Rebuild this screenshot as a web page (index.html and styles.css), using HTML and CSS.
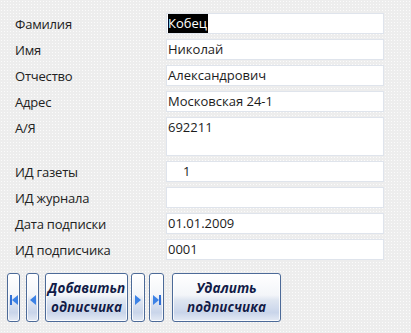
FILE: index.html
```html
<!DOCTYPE html>
<html lang="ru">
<head>
    <meta charset="UTF-8">
    <title>Подписчик</title>
    <link rel="stylesheet" href="styles.css">
</head>
<body>
    <div class="form">
        <div class="fields">
            <div class="label">Фамилия</div>
            <div class="field"><span class="selected">Кобец</span></div>

            <div class="label">Имя</div>
            <div class="field">Николай</div>

            <div class="label">Отчество</div>
            <div class="field">Александрович</div>

            <div class="label">Адрес</div>
            <div class="field">Московская 24-1</div>

            <div class="label">А/Я</div>
            <div class="field tall">692211</div>

            <div class="label">ИД газеты</div>
            <div class="field number">1</div>

            <div class="label">ИД журнала</div>
            <div class="field"></div>

            <div class="label">Дата подписки</div>
            <div class="field">01.01.2009</div>

            <div class="label">ИД подписчика</div>
            <div class="field">0001</div>
        </div>

        <!-- навигация по записям -->
        <div class="buttons">
            <button class="btn nav first" title="Первая запись">
                <svg width="8" height="10" viewBox="0 0 8 10"><rect x="0" y="0" width="2" height="10" fill="#2f6fd6"/><path d="M8 0 L2 5 L8 10 Z" fill="#3c82e6"/></svg>
            </button>
            <button class="btn nav prev" title="Предыдущая запись">
                <svg width="6" height="10" viewBox="0 0 6 10"><path d="M6 0 L0 5 L6 10 Z" fill="#3c82e6"/></svg>
            </button>
            <button class="btn action add">Добавитьп<br>одписчика</button>
            <button class="btn nav next" title="Следующая запись">
                <svg width="6" height="10" viewBox="0 0 6 10"><path d="M0 0 L6 5 L0 10 Z" fill="#3c82e6"/></svg>
            </button>
            <button class="btn nav last" title="Последняя запись">
                <svg width="8" height="10" viewBox="0 0 8 10"><path d="M0 0 L6 5 L0 10 Z" fill="#3c82e6"/><rect x="6" y="0" width="2" height="10" fill="#2f6fd6"/></svg>
            </button>
            <button class="btn action delete">Удалить<br>подписчика</button>
        </div>
    </div>
</body>
</html>
```

FILE: styles.css
```css
body {
    margin: 0;
    padding: 0;
    background-color: #ededed;
    background-image: radial-gradient(#fbfbfb 0.6px, transparent 0.9px);
    background-size: 3px 3px;
    font-family: 'Open Sans', 'Noto Sans', sans-serif;
    font-size: 13px;
    color: #1c1c1c;
}
.form {
    padding: 13px 0 0 15px;
}
.fields {
    display: grid;
    grid-template-columns: 151px 218px;
    row-gap: 5px;
}
.label {
    line-height: 19px;
    padding-top: 2px;
    color: #222;
    letter-spacing: -0.2px;
}
.field {
    box-sizing: border-box;
    height: 21px;
    background-color: #ffffff;
    border: 1px solid #dfe4ec;
    padding: 0 0 0 1px;
    line-height: 19px;
    white-space: nowrap;
    overflow: hidden;
}
.field.tall {
    height: 39px;
}
.field.number {
    padding-left: 16px;
}
.selected {
    display: inline-block;
    background-color: #000000;
    color: #ffffff;
    line-height: 19px;
    padding-right: 1px;
}
.buttons {
    display: flex;
    align-items: stretch;
    margin: 13px 0 0 -8px;
    height: 49px;
}
.btn {
    box-sizing: border-box;
    height: 49px;
    margin: 0;
    padding: 0;
    border: 1px solid #4c6a98;
    border-radius: 3px;
    background: linear-gradient(to bottom, #ffffff 0%, #f3f5f9 45%, #dfe6f1 55%, #c9d5ea 82%, #e4eaf4 100%);
    box-shadow: inset 0 0 0 1px rgba(255, 255, 255, 0.8);
    cursor: pointer;
    display: flex;
    align-items: center;
    justify-content: center;
}
.nav {
    width: 13px;
}
.nav svg {
    display: block;
    margin-top: 5px;
}
.first { width: 13px; }
.prev { width: 13px; margin-left: 6px; }
.add { width: 83px; margin-left: 6px; }
.next { width: 14px; margin-left: 3px; }
.last { width: 15px; margin-left: 4px; }
.delete { width: 109px; margin-left: 8px; }
.action {
    font-family: 'Open Sans', 'Noto Sans', sans-serif;
    font-size: 13.5px;
    font-weight: bold;
    font-style: italic;
    line-height: 19px;
    color: #121c48;
    text-align: center;
    text-shadow: 0 0 1px rgba(255, 255, 255, 0.9);
}
```
